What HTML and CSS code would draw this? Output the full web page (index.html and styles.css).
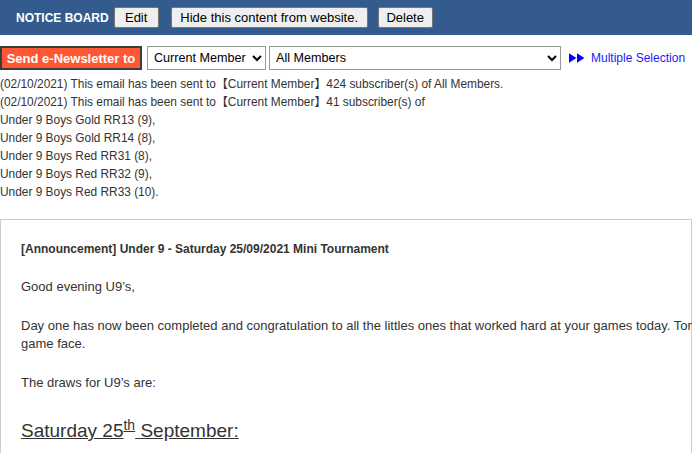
FILE: index.html
```html
<!DOCTYPE html>
<html>
<head>
<meta charset="utf-8">
<link rel="stylesheet" href="styles.css">
</head>
<body>
<div class="topbar">
  <span class="board-title">NOTICE BOARD</span>
  <button class="btn btn-edit">Edit</button>
  <button class="btn btn-hide">Hide this content from website.</button>
  <button class="btn btn-delete">Delete</button>
</div>

<div class="send-row">
  <button class="send-btn">Send e-Newsletter to</button>
  <select class="sel sel-type"><option>Current Member</option></select>
  <select class="sel sel-group"><option>All Members</option></select>
  <a class="multi" href="#"><svg class="arrows" width="15" height="9" viewBox="0 0 15 9"><polygon points="0,0 7,4.5 0,9" fill="#0000ff"/><polygon points="7.5,0 14.5,4.5 7.5,9" fill="#0000ff"/></svg>Multiple Selection</a>
</div>

<div class="log">
  <div>(02/10/2021) This email has been sent to【Current Member】424 subscriber(s) of All Members.</div>
  <div>(02/10/2021) This email has been sent to【Current Member】41 subscriber(s) of</div>
  <div>Under 9 Boys Gold RR13 (9),</div>
  <div>Under 9 Boys Gold RR14 (8),</div>
  <div>Under 9 Boys Red RR31 (8),</div>
  <div>Under 9 Boys Red RR32 (9),</div>
  <div>Under 9 Boys Red RR33 (10).</div>
</div>

<div class="notice">
  <div class="notice-inner">
    <p class="notice-title">[Announcement] Under 9 - Saturday 25/09/2021 Mini Tournament</p>
    <p class="para">Good evening U9’s,</p>
    <p class="para">Day one has now been completed and congratulation to all the littles ones that worked hard at your games today. Tomorrow bring your game face.</p>
    <p class="para">The draws for U9’s are:</p>
    <h2 class="day"><u>Saturday 25</u><sup><u>th</u></sup><u> September:</u></h2>
  </div>
</div>
</body>
</html>
```

FILE: styles.css
```css
html, body {
  margin: 0;
  padding: 0;
}
body {
  width: 692px;
  overflow: hidden;
  background: #fff;
  font-family: "Liberation Sans", Arial, "Noto Sans CJK SC", sans-serif;
  color: #333;
}
.topbar {
  display: flex;
  align-items: center;
  height: 35px;
  padding-left: 16px;
  background: #335b8e;
}
.board-title {
  color: #fff;
  font-weight: bold;
  font-size: 12px;
  margin-right: 5px;
}
.btn {
  height: 21px;
  padding: 0;
  font-family: "Liberation Sans", Arial, sans-serif;
  font-size: 13px;
  color: #000;
  background: #efefef;
  border: 1px solid #767676;
  border-radius: 2px;
}
.btn-edit {
  width: 45px;
}
.btn-hide {
  width: 197px;
  margin-left: 12px;
}
.btn-delete {
  width: 55px;
  margin-left: 10px;
}
.send-row {
  display: flex;
  align-items: center;
  margin-top: 11px;
}
.send-btn {
  height: 24px;
  width: 142px;
  padding: 0;
  font-family: "Liberation Sans", Arial, sans-serif;
  font-size: 13px;
  font-weight: bold;
  color: #fff;
  background: #ff5733;
  border: 2px solid #3c3c3c;
  border-radius: 0;
}
.sel {
  height: 24px;
  padding: 0 0 0 2px;
  font-family: "Liberation Sans", Arial, sans-serif;
  font-size: 12.6px;
  color: #000;
  background: #fff;
  border: 1px solid #999;
  border-radius: 0;
}
.sel-type {
  width: 119px;
  margin-left: 5px;
}
.sel-group {
  width: 292px;
  margin-left: 3px;
}
.multi {
  display: flex;
  align-items: center;
  margin-left: 8px;
  font-size: 12px;
  color: #1a1aff;
  text-decoration: none;
}
.arrows {
  width: 16px;
  height: 10px;
  margin-right: 6px;
}
.log {
  margin-top: 5px;
  font-size: 11.9px;
  line-height: 18px;
  color: #333;
}
.notice {
  box-sizing: border-box;
  width: 692px;
  margin-top: 18px;
  border: 1px solid #ccc;
  padding: 20px 20px 0;
  height: 240px;
}
.notice-inner {
  width: 800px;
}
.notice-title {
  margin: 0 0 20px;
  font-size: 12px;
  font-weight: bold;
  line-height: 18px;
  color: #333;
}
.para {
  margin: 0 0 21px;
  font-size: 13px;
  line-height: 18px;
  color: #333;
}
.day {
  margin: 26px 0 0;
  font-weight: normal;
  font-size: 19px;
  line-height: 26px;
  color: #333;
}
.day sup {
  font-size: 14px;
  line-height: 0;
}
```
